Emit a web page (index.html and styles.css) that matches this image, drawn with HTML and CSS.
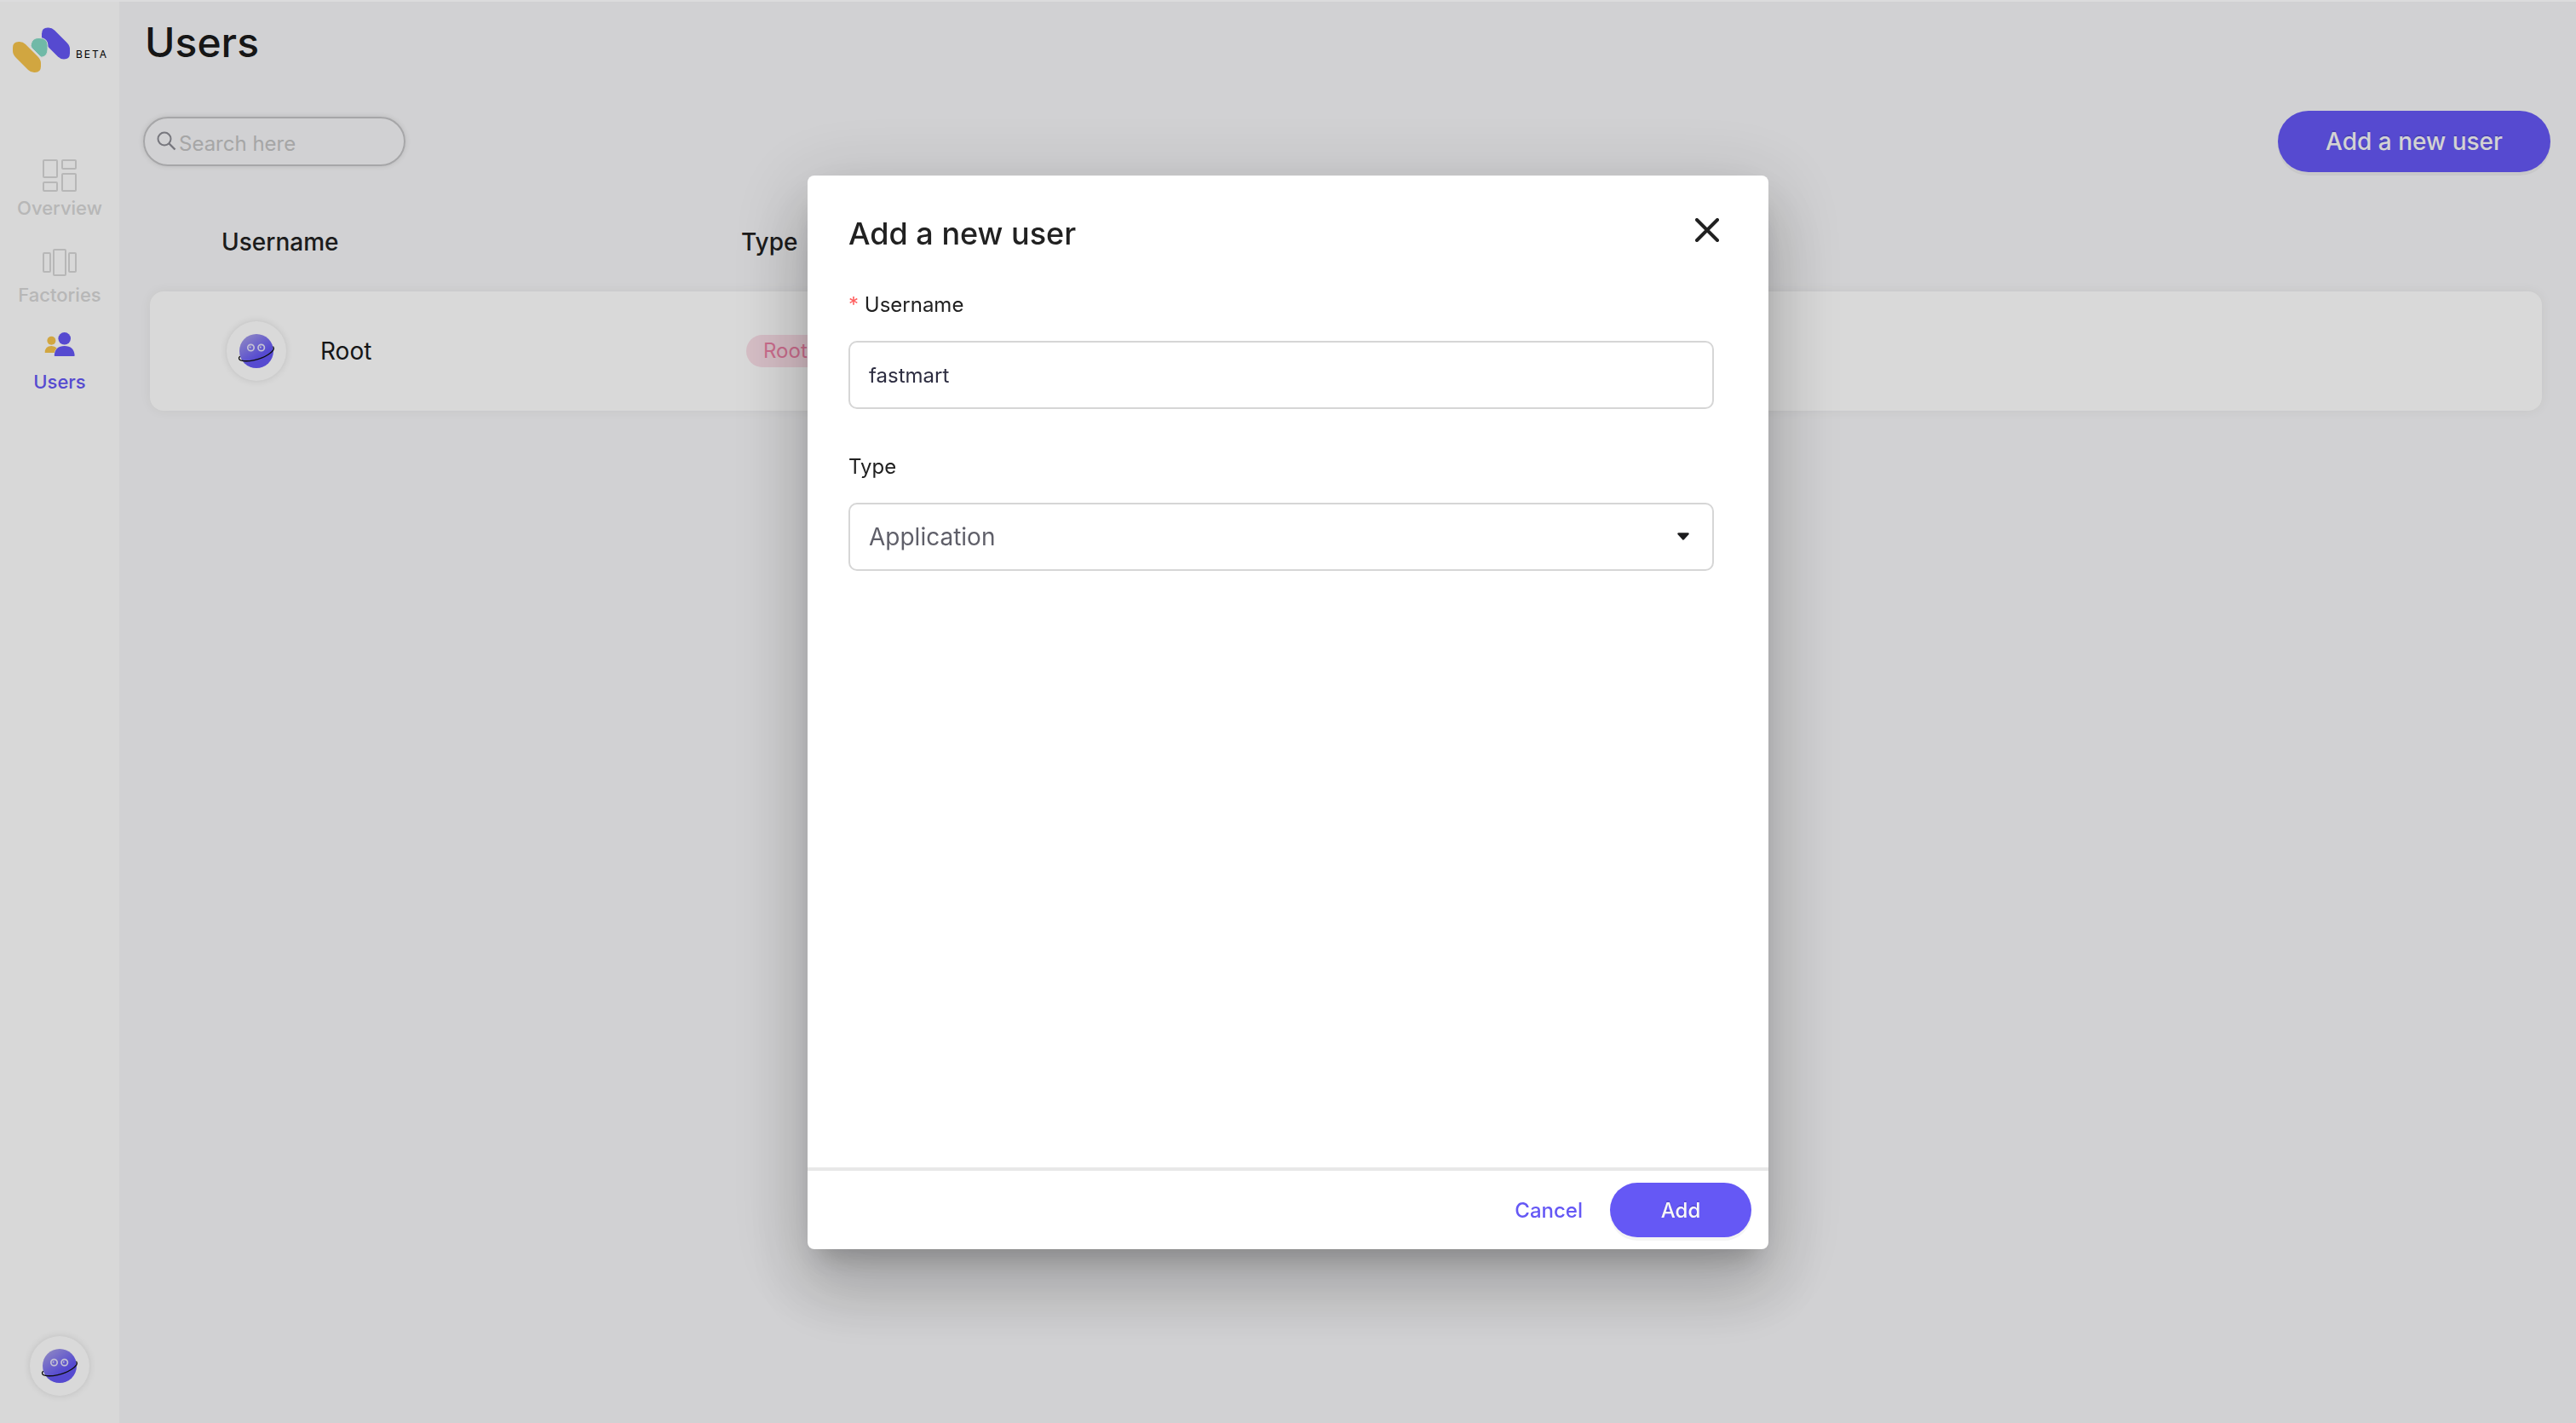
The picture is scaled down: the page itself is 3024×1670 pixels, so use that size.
FILE: index.html
```
<!DOCTYPE html>
<html lang="en">
<head>
<meta charset="utf-8">
<title>Users</title>
<link rel="stylesheet" href="styles.css">
</head>
<body>
<svg class="defs" aria-hidden="true">
  <defs>
    <linearGradient id="planet-fill" x1="0.1" y1="0.05" x2="0.6" y2="0.75">
      <stop offset="0" stop-color="#a79fe6"/>
      <stop offset="0.9" stop-color="#6558f5"/>
    </linearGradient>
    <symbol id="planet" viewBox="0 0 44 44">
      <circle cx="22" cy="22" r="20" fill="url(#planet-fill)"/>
      <circle cx="15.500" cy="18" r="3.700" fill="none" stroke="#e6e4f8" stroke-width="1.700"/>
      <circle cx="27.700" cy="18" r="3.700" fill="none" stroke="#e6e4f8" stroke-width="1.700"/>
      <circle cx="14.600" cy="17.500" r="0.900" fill="#e6e4f8"/>
      <circle cx="26.800" cy="17.500" r="0.900" fill="#e6e4f8"/>
      <path d="M2.500 28.500C0.500 30 1.500 32.500 4.500 33.200C12 35 27 32 36 26C42 22 43.500 19.500 41.800 17" fill="none" stroke="#111" stroke-width="1.300" stroke-linecap="round"/>
    </symbol>
  </defs>
</svg>
<div class="app">
  <nav class="sidebar" aria-label="Main">
    <a class="brand" href="#" aria-label="Home">
      <svg class="brand-mark" viewBox="0 0 68 54" aria-hidden="true">
        <path d="M41 .5h1q4 0 7 3l14 14q4 4 4 8v5q0 7-7 7q-4 0-7-3l-15-15q-4-4-4-8v-4q0-7 7-7z" fill="#6558f5"/>
        <path d="M7 17h1q4 0 7 3l14 14q4 4 4 8v4q0 7-7 7h-1q-4 0-7-3l-14-14q-4-4-4-8v-4q0-7 7-7z" fill="#f6c44c"/>
        <path d="M30 12.500h1q10 0 10 9v4q0 8-6 9.500q-2 .5-3-1l-10-10q-1.500-2-.5-5q2-6.500 8.500-6.500z" fill="#84dac5" stroke="#fdfdfd" stroke-width="1"/>
      </svg>
      <span class="beta">BETA</span>
    </a>
    <ul class="menu">
      <li><a class="menu-item" href="#">
        <svg viewBox="0 0 40 40" aria-hidden="true"><g fill="none" stroke="#d7d7d7" stroke-width="2"><rect x="1" y="2" width="16" height="20" rx="1"/><rect x="23" y="2" width="16" height="10" rx="1"/><rect x="1" y="28" width="16" height="10" rx="1"/><rect x="23" y="18" width="16" height="20" rx="1"/></g></svg>
        <span>Overview</span></a></li>
      <li><a class="menu-item" href="#">
        <svg viewBox="0 0 40 40" aria-hidden="true"><g fill="none" stroke="#d7d7d7" stroke-width="2"><rect x="1" y="9" width="8" height="22" rx="1"/><rect x="13" y="5" width="14" height="30" rx="1"/><rect x="31" y="9" width="8" height="22" rx="1"/></g></svg>
        <span>Factories</span></a></li>
      <li><a class="menu-item active" href="#" aria-current="page">
        <svg viewBox="0 0 40 40" aria-hidden="true"><circle cx="10.400" cy="9.700" r="5" fill="#f6c44c"/><path d="M2.700 24q0-8 7.700-8q4 0 6.300 2.500q-2.500 2.500-3 5.500z" fill="#f6c44c"/><circle cx="25.700" cy="7.300" r="7.300" fill="#6558f5"/><path d="M13.700 27q1-11 12-11t12 11q0 1-1 1h-22q-1 0-1-1z" fill="#6558f5"/></svg>
        <span>Users</span></a></li>
    </ul>
    <button class="avatar profile" type="button" aria-label="Profile"><svg aria-hidden="true"><use href="#planet"/></svg></button>
  </nav>
  <main class="page">
    <h1>Users</h1>
    <div class="toolbar">
      <label class="search">
        <svg viewBox="0 0 24 24" aria-hidden="true"><circle cx="9" cy="9" r="7.500" fill="none" stroke="#8c8c94" stroke-width="2"/><path d="M14.500 14.500L21.500 21.500" stroke="#8c8c94" stroke-width="2.400"/></svg>
        <input type="search" placeholder="Search here" aria-label="Search here">
      </label>
      <button class="btn btn-large" type="button">Add a new user</button>
    </div>
    <table class="users">
      <thead><tr><th scope="col">Username</th><th scope="col">Type</th></tr></thead>
      <tbody><tr>
        <td class="user"><span class="avatar"><svg aria-hidden="true"><use href="#planet"/></svg></span><span>Root</span></td>
        <td><span class="chip">Root</span></td>
      </tr></tbody>
    </table>
  </main>
</div>
<div class="overlay">
  <form class="dialog" role="dialog" aria-modal="true" aria-labelledby="dialog-title">
    <div class="dialog-body">
      <header class="dialog-head">
        <h2 id="dialog-title">Add a new user</h2>
        <button class="close" type="button" aria-label="Close"><svg viewBox="0 0 28 28" aria-hidden="true"><path d="M2 2L26 26M26 2L2 26" stroke="#212121" stroke-width="4" stroke-linecap="round"/></svg></button>
      </header>
      <div class="field">
        <label for="username"><span class="required">*</span> Username</label>
        <input id="username" class="control" type="text" value="fastmart" required>
      </div>
      <div class="field">
        <label for="type">Type</label>
        <div class="select">
          <select id="type" class="control"><option>Application</option></select>
          <svg viewBox="0 0 16 10" aria-hidden="true"><path d="M2.500 1.500h11L8 7.500z" fill="#1c1c1e" stroke="#1c1c1e" stroke-width="2.500" stroke-linejoin="round"/></svg>
        </div>
      </div>
    </div>
    <footer class="dialog-foot">
      <button class="link" type="button">Cancel</button>
      <button class="btn" type="submit">Add</button>
    </footer>
  </form>
</div>
</body>
</html>
```
FILE: styles.css
```
* {
  box-sizing: border-box;
}

body {
  margin: 0;
  border-top: 2px solid #dcdcdd;
  background: #f6f6f8;
  color: #212121;
  font-family: Inter, "Liberation Sans", sans-serif;
  font-size: 24px;
}

button,
input,
select {
  font: inherit;
  color: inherit;
}

button {
  padding: 0;
  border: 0;
  background: none;
  cursor: pointer;
}

a {
  color: inherit;
  text-decoration: none;
}

.defs {
  position: absolute;
  width: 0;
  height: 0;
}

.app {
  display: flex;
  min-height: calc(100vh - 2px);
}

/* Sidebar */

.sidebar {
  display: flex;
  flex-direction: column;
  align-items: center;
  width: 140px;
  padding: 30px 0 32px;
  background: #fefefe;
}

.brand {
  display: flex;
  align-items: center;
  gap: 6px;
  padding-left: 2px;
}

.brand-mark {
  width: 68px;
  height: 54px;
}

.beta {
  padding-top: 8px;
  color: #000;
  font-size: 12px;
  letter-spacing: 2px;
}

.menu {
  display: grid;
  gap: 26px;
  margin: 0 0 auto;
  padding: 100px 0 0;
  list-style: none;
}

.menu-item {
  display: flex;
  flex-direction: column;
  align-items: center;
  color: #d7d7d7;
  font-size: 22px;
  font-weight: 500;
  line-height: 36px;
}

.menu-item svg {
  width: 40px;
  height: 40px;
}

.menu-item.active {
  color: #6558f5;
}

.avatar {
  display: grid;
  place-items: center;
  width: 70px;
  height: 70px;
  border-radius: 50%;
  background: #fff;
  box-shadow: 0 0 8px rgba(0, 0, 0, 0.12);
}

.avatar svg {
  width: 44px;
  height: 44px;
}

/* Page */

.page {
  flex: 1;
  min-width: 0;
  padding: 16px 30px 0 28px;
}

h1 {
  margin: 0;
  padding-left: 2px;
  color: #1a1a1a;
  font-size: 48px;
  font-weight: 500;
  line-height: 64px;
}

.toolbar {
  display: flex;
  align-items: center;
  justify-content: space-between;
  margin-top: 48px;
}

.search {
  display: flex;
  align-items: center;
  gap: 2px;
  width: 308px;
  height: 58px;
  padding: 0 14px;
  border: 2px solid #c4c4c6;
  border-radius: 29px;
  box-shadow: 0 0 6px rgba(0, 0, 0, 0.12);
}

.search svg {
  flex: none;
  width: 24px;
  height: 24px;
}

.search input {
  width: 100%;
  min-width: 0;
  padding: 4px 0 0;
  border: 0;
  outline: 0;
  background: none;
}

.search input::placeholder {
  color: #c3c3c4;
}

.btn {
  min-width: 166px;
  height: 64px;
  border-radius: 36px;
  background: #6558f5;
  box-shadow: 0 4px 0 rgba(0, 0, 0, 0.045);
  color: #f8f8f8;
  font-weight: 500;
  text-shadow: 0 -2px 0 rgba(0, 0, 0, 0.12);
}

.btn-large {
  min-width: 320px;
  height: 72px;
  font-size: 28px;
}

.users {
  display: block;
  margin: 52px 10px 0 8px;
}

.users thead,
.users tbody {
  display: block;
}

.users tr {
  display: grid;
  grid-template-columns: 610px 1fr;
  align-items: center;
}

.users th {
  padding: 0;
  font-size: 28px;
  font-weight: 500;
  line-height: 60px;
  text-align: left;
}

.users thead tr {
  padding-left: 84px;
}

.users tbody {
  margin-top: 28px;
  border-radius: 16px;
  background: #fff;
  box-shadow: 0 0 14px rgba(0, 0, 0, 0.06);
}

.users tbody tr {
  min-height: 140px;
  padding-left: 90px;
}

.users td {
  padding: 0;
}

.users .user {
  display: flex;
  align-items: center;
  gap: 40px;
  color: #1a1a1a;
  font-size: 28px;
}

.chip {
  display: inline-block;
  padding: 0 20px;
  border-radius: 19px;
  background: #fbdfe8;
  color: #ee7fa5;
  line-height: 38px;
}

/* Dialog */

.overlay {
  position: fixed;
  inset: 2px 0 0;
  display: flex;
  align-items: center;
  justify-content: center;
  background: rgba(0, 0, 0, 0.15);
}

.dialog {
  display: flex;
  flex-direction: column;
  width: 1128px;
  max-width: 100%;
  min-height: 1260px;
  border-radius: 8px;
  background: #fff;
  box-shadow:
    0 22px 30px -14px rgba(0, 0, 0, 0.2),
    0 48px 76px 6px rgba(0, 0, 0, 0.14),
    0 18px 92px 16px rgba(0, 0, 0, 0.12);
}

.dialog-body {
  flex: 1;
  padding: 40px 64px 0 48px;
}

.dialog-head {
  display: flex;
  align-items: flex-start;
  justify-content: space-between;
}

h2 {
  margin: 0;
  font-size: 36px;
  font-weight: 500;
  line-height: 56px;
}

.close {
  display: grid;
  place-items: center;
  width: 48px;
  height: 48px;
  margin-right: -16px;
}

.close svg {
  width: 28px;
  height: 28px;
}

.field {
  margin-top: 36px;
}

.field + .field {
  margin-top: 48px;
}

.field label {
  display: block;
  line-height: 40px;
}

.required {
  color: #ff5c5c;
}

.control {
  display: block;
  width: 100%;
  height: 80px;
  margin-top: 22px;
  padding: 0 22px;
  border: 2px solid #d6d6d6;
  border-radius: 10px;
  outline: 0;
  background: #fff;
  color: #2c2c40;
}

.select {
  display: grid;
  align-items: center;
}

.select > * {
  grid-area: 1 / 1;
}

.select .control {
  appearance: none;
  color: #5f5f69;
  font-size: 28px;
}

.select svg {
  justify-self: end;
  width: 16px;
  height: 10px;
  margin: 22px 28px 0 0;
  pointer-events: none;
}

.dialog-foot {
  display: flex;
  align-items: center;
  justify-content: flex-end;
  gap: 32px;
  padding: 14px 20px;
  border-top: 4px solid #e8e8e8;
}

.link {
  color: #6558f5;
  font-weight: 500;
}
```
